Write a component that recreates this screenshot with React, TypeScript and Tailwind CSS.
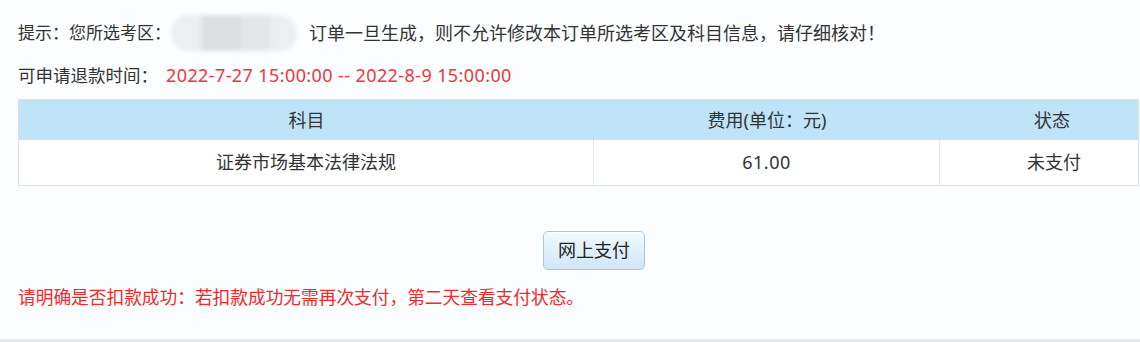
import React from "react";

export default function App() {
  const font = { fontFamily: '"Noto Sans", "Noto Sans CJK SC", sans-serif' };
  return (
    <div
      className="w-[1140px] h-[342px] bg-[#fcfdff] border-b-[3px] border-[#e6e9ec] overflow-hidden text-[#333] text-[18px]"
      style={font}
    >
      <div className="pl-[18px] pt-[12px]">
        <div className="flex items-center h-[42px]">
          <span className="text-[17px]">提示：您所选考区：</span>
          <span className="inline-flex items-center ml-[0px] mr-[12px] w-[126px] h-[36px] rounded-full bg-[#e9ebec] blur-[2px] overflow-hidden">
            <span className="block w-[30px] h-full bg-[#eceeef]" />
            <span className="block w-[40px] h-full bg-[#dcdfe1]" />
            <span className="block w-[30px] h-full bg-[#e3e6e7]" />
            <span className="block w-[26px] h-full bg-[#eceeef]" />
          </span>
          <span>订单一旦生成，则不允许修改本订单所选考区及科目信息，请仔细核对！</span>
        </div>
        <div className="flex items-center h-[42px]">
          <span className="text-[17.5px]">可申请退款时间：</span>
          <span className="ml-[8px] text-[#e8383f] tracking-[0.4px]">2022-7-27 15:00:00 -- 2022-8-9 15:00:00</span>
        </div>
      </div>

      <div className="ml-[18px] mt-[3px] w-[1121px] border border-[#d7e4ee]">
        <div className="grid grid-cols-[575px_346px_198px] h-[40px] bg-[#bfe4f8] items-center text-center">
          <div>科目</div>
          <div>费用(单位：元)</div>
          <div className="pl-[26px]">状态</div>
        </div>
        <div className="grid grid-cols-[575px_346px_198px] h-[45px] bg-white items-center text-center">
          <div className="h-full flex items-center justify-center border-r border-[#dde6ee]">证券市场基本法律法规</div>
          <div className="h-full flex items-center justify-center border-r border-[#dde6ee] tracking-[0.5px]">61.00</div>
          <div className="h-full flex items-center justify-center pl-[30px]">未支付</div>
        </div>
      </div>

      <div className="pl-[543px] mt-[45px]">
        <button
          className="w-[102px] h-[39px] rounded-[5px] border border-[#a8c8e2] bg-gradient-to-b from-[#f2f9fe] to-[#cfe6f7] text-[#222] text-[18px] shadow-[inset_0_1px_0_#ffffff]"
          style={font}
        >
          网上支付
        </button>
      </div>

      <div className="pl-[18px] mt-[14px] h-[26px] flex items-center text-[#ee2a2a] text-[17.7px]">
        请明确是否扣款成功：若扣款成功无需再次支付，第二天查看支付状态。
      </div>
    </div>
  );
}
